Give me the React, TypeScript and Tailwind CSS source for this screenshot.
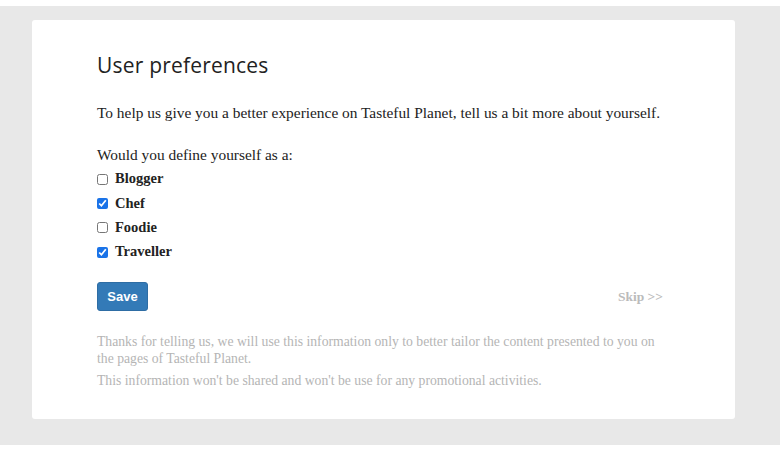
import { useState } from "react";

const roles = [
  { name: "Blogger", checked: false },
  { name: "Chef", checked: true },
  { name: "Foodie", checked: false },
  { name: "Traveller", checked: true },
];

export default function App() {
  const [picked, setPicked] = useState(roles.map((r) => r.checked));

  return (
    <div className="w-[780px] h-[450px] bg-white pt-[6px] font-['Liberation_Serif',serif]">
      <div className="bg-[#e8e8e8] h-[439px] pt-[14px] px-[32px]">
        <div className="bg-white w-[703px] h-[399px] rounded-[3px] pl-[65px] pr-[72px] pt-[30px]">
          <h1 className="font-['Open_Sans',sans-serif] text-[21px] leading-[30px] text-[#222] tracking-[0.2px]">
            User preferences
          </h1>
          <p className="mt-[23px] text-[15.4px] leading-[20px] text-[#222]">
            To help us give you a better experience on Tasteful Planet, tell us a bit more about yourself.
          </p>
          <p className="mt-[22px] text-[15.4px] leading-[20px] text-[#222]">Would you define yourself as a:</p>
          <div className="mt-[2px] flex flex-col">
            {roles.map((r, i) => (
              <label key={r.name} className="flex items-center gap-[7px] h-[24.3px]">
                <input
                  type="checkbox"
                  checked={picked[i]}
                  onChange={() => setPicked(picked.map((p, j) => (j === i ? !p : p)))}
                  className="m-0 w-[11px] h-[11px] accent-[#1a73e8]"
                />
                <span className="text-[14.5px] font-bold text-[#222]">{r.name}</span>
              </label>
            ))}
          </div>
          <div className="mt-[18px] flex items-center justify-between">
            <button className="w-[51px] h-[29px] rounded-[3px] bg-[#337ab7] border border-[#2e6da4] text-white text-[13px] font-bold font-['Liberation_Sans',sans-serif]">
              Save
            </button>
            <a className="text-[13.5px] font-bold text-[#bbb]">Skip &gt;&gt;</a>
          </div>
          <div className="mt-[22px] text-[13.7px] leading-[17px] text-[#b5b5b5]">
            <p>
              Thanks for telling us, we will use this information only to better tailor the content presented to you on
              the pages of Tasteful Planet.
            </p>
            <p className="mt-[5px]">This information won't be shared and won't be use for any promotional activities.</p>
          </div>
        </div>
      </div>
    </div>
  );
}
